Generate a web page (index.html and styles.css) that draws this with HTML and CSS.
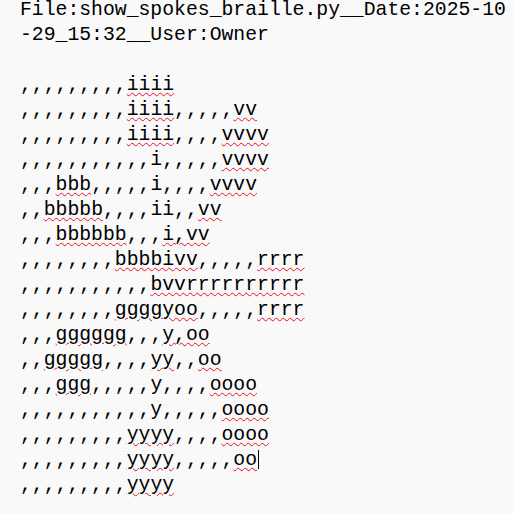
FILE: index.html
```html
<!DOCTYPE html>
<html>
<head>
<meta charset="utf-8">
<link rel="stylesheet" href="styles.css">
</head>
<body>
<div class="editor">
<div class="line">File:show_spokes_braille.py__Date:2025-10</div>
<div class="line">-29_15:32__User:Owner</div>
<div class="line"> </div>
<div class="line">,,,,,,,,,<span class="sp">iiii</span></div>
<div class="line">,,,,,,,,,<span class="sp">iiii</span>,,,,,<span class="sp">vv</span></div>
<div class="line">,,,,,,,,,<span class="sp">iiii</span>,,,,<span class="sp">vvvv</span></div>
<div class="line">,,,,,,,,,,,i,,,,,<span class="sp">vvvv</span></div>
<div class="line">,,,<span class="sp">bbb</span>,,,,,i,,,,<span class="sp">vvvv</span></div>
<div class="line">,,<span class="sp">bbbbb</span>,,,,ii,,<span class="sp">vv</span></div>
<div class="line">,,,<span class="sp">bbbbbb</span>,,,<span class="sp">i,vv</span></div>
<div class="line">,,,,,,,,<span class="sp">bbbbivv</span>,,,,,<span class="sp">rrrr</span></div>
<div class="line">,,,,,,,,,,,<span class="sp">bvvrrrrrrrrrr</span></div>
<div class="line">,,,,,,,,<span class="sp">ggggyoo</span>,,,,,<span class="sp">rrrr</span></div>
<div class="line">,,,<span class="sp">gggggg</span>,,,<span class="sp">y,oo</span></div>
<div class="line">,,<span class="sp">ggggg</span>,,,,<span class="sp">yy</span>,,<span class="sp">oo</span></div>
<div class="line">,,,<span class="sp">ggg</span>,,,,,y,,,,<span class="sp">oooo</span></div>
<div class="line">,,,,,,,,,,,y,,,,,<span class="sp">oooo</span></div>
<div class="line">,,,,,,,,,<span class="sp">yyyy</span>,,,,<span class="sp">oooo</span></div>
<div class="line">,,,,,,,,,<span class="sp">yyyy</span>,,,,,<span class="sp">oo</span><span class="caret"></span></div>
<div class="line">,,,,,,,,,<span class="sp">yyyy</span></div>
</div>
</body>
</html>
```

FILE: styles.css
```css
html, body {
  margin: 0;
  padding: 0;
  background: #f9f9f9;
}

body {
  overflow: hidden;
}

.editor {
  margin-top: -2px;
  padding: 0 0 0 20px;
  font-family: "Liberation Mono", "DejaVu Sans Mono", monospace;
  font-size: 19.75px;
  line-height: 25px;
  color: #000;
}

.line {
  height: 25px;
  white-space: pre;
}

.sp {
  text-decoration-line: underline;
  text-decoration-style: wavy;
  text-decoration-color: #e81123;
  text-decoration-thickness: 1px;
  text-underline-offset: 2px;
}

.caret {
  display: inline-block;
  width: 1px;
  height: 19px;
  margin-left: 1px;
  background: #000;
  vertical-align: -4px;
}
```
